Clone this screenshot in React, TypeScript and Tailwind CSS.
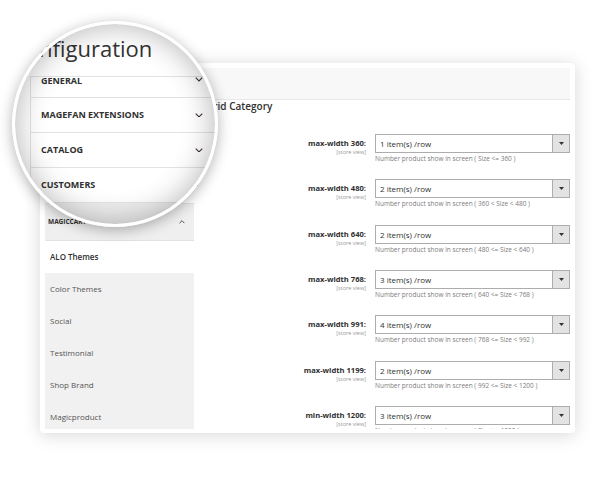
import React from 'react';

const ROWS = [
  { label: 'max-width 360:', value: '1 item(s) /row', hint: 'Number product show in screen ( Size <= 360 )' },
  { label: 'max-width 480:', value: '2 item(s) /row', hint: 'Number product show in screen ( 360 < Size < 480 )' },
  { label: 'max-width 640:', value: '2 item(s) /row', hint: 'Number product show in screen ( 480 <= Size < 640 )' },
  { label: 'max-width 768:', value: '3 item(s) /row', hint: 'Number product show in screen ( 640 <= Size < 768 )' },
  { label: 'max-width 991:', value: '4 item(s) /row', hint: 'Number product show in screen ( 768 <= Size < 992 )' },
  { label: 'max-width 1199:', value: '2 item(s) /row', hint: 'Number product show in screen ( 992 <= Size < 1200 )' },
  { label: 'min-width 1200:', value: '3 item(s) /row', hint: 'Number product show in screen ( Size >= 1200 )' },
];

const SECTIONS = ['GENERAL', 'MAGEFAN EXTENSIONS', 'CATALOG', 'CUSTOMERS'];
const LINKS = ['Color Themes', 'Social', 'Testimonial', 'Shop Brand', 'Magicproduct'];

const Chevron = ({ up = false, size = 8 }: { up?: boolean; size?: number }) => (
  <svg width={size} height={size * 0.6} viewBox="0 0 8 5" fill="none" stroke="#41362f" strokeWidth={1.2}>
    <polyline points={up ? '0.6,4.4 4,1 7.4,4.4' : '0.6,0.6 4,4 7.4,0.6'} />
  </svg>
);

const Magnifier = () => (
  <div className="absolute left-[12px] top-[21px] h-[206px] w-[206px] overflow-hidden rounded-full bg-white shadow-[0_3px_14px_rgba(0,0,0,0.3)]">
    {/* zoomed page, coordinates relative to the lens */}
    <div className="absolute left-[0px] top-[14px] text-[22px] leading-[26px] text-[#333]">Configuration</div>
    <div className="absolute left-[18px] top-[55px] w-[230px] border-l border-t border-[#e3e3e3]">
      {SECTIONS.map((s, i) => (
        <div
          key={s}
          className={`flex justify-between border-b border-[#e3e3e3] pl-[10px] pr-[57px] ${
            i === 0 ? 'h-[21px] items-start' : 'h-[35px] items-center'
          }`}
        >
          <span className="text-[9px] font-bold leading-[8px] text-[#303030]">{s}</span>
          <Chevron />
        </div>
      ))}
      <div className="h-[40px] bg-[#eeeeee]" />
    </div>
    <div className="absolute inset-0 rounded-full border-[3px] border-white shadow-[inset_0_0_30px_rgba(0,0,0,0.3)]" />
  </div>
);

export default function App() {
  return (
    <div className="relative h-[486px] w-[612px] overflow-hidden bg-white font-['Open_Sans',sans-serif]">
      <div className="ml-[40px] mt-[63px] h-[370px] w-[535px] rounded-[4px] bg-white px-[5px] pb-[4px] pt-[5px] shadow-[0_2px_18px_rgba(0,0,0,0.16)]">
        <div className="flex h-full flex-col overflow-hidden">
          <div className="h-[32px] shrink-0 border-b border-[#e8e8e8] bg-[#f8f8f8]" />
          <div className="flex min-h-0 flex-1">
            {/* sidebar */}
            <aside className="flex w-[149px] shrink-0 flex-col overflow-hidden">
              {SECTIONS.map((s) => (
                <div key={s} className="flex h-[26px] shrink-0 items-center justify-between border-b border-[#e3e3e3] px-[10px]">
                  <span className="text-[6.5px] font-bold text-[#303030]">{s}</span>
                  <Chevron size={6} />
                </div>
              ))}
              <div className="flex h-[37px] shrink-0 items-center justify-between border-b border-[#e2e2e2] bg-[#efefef] pl-[3px] pr-[9px]">
                <span className="text-[6.5px] font-bold text-[#303030]">MAGICCART</span>
                <Chevron up size={6} />
              </div>
              <div className="flex h-[32px] shrink-0 items-center px-[5px] text-[8px] font-semibold text-[#303030]">ALO Themes</div>
              <div className="min-h-0 flex-1 bg-[#f1f1f1]">
                {LINKS.map((l) => (
                  <div key={l} className="flex h-[32px] items-center px-[5px] text-[8px] text-[#555]">
                    {l}
                  </div>
                ))}
              </div>
            </aside>

            {/* main form */}
            <main className="flex-1 pl-[12px]">
              <h2 className="text-[10px] font-semibold leading-[12px] text-[#303030]">Grid Category</h2>
              <div className="mt-[22px] flex flex-col">
                {ROWS.map((r) => (
                  <div key={r.label} className="flex h-[45.33px] shrink-0 items-start gap-[9px]">
                    <div className="flex w-[160px] flex-col items-end pt-[4px]">
                      <span className="text-[7.6px] font-bold leading-[10px] text-[#303030]">{r.label}</span>
                      <span className="text-[5.5px] leading-[8px] text-[#999]">[store view]</span>
                    </div>
                    <div className="w-[195px]">
                      <div className="flex h-[19px] border border-[#adadad] bg-white">
                        <span className="flex-1 px-[4px] text-[8px] leading-[17px] text-[#303030]">{r.value}</span>
                        <span className="flex w-[17px] items-center justify-center border-l border-[#adadad] bg-[#e3e3e3]">
                          <svg width="5" height="3" viewBox="0 0 5 3">
                            <polygon points="0,0 5,0 2.5,3" fill="#333" />
                          </svg>
                        </span>
                      </div>
                      <div className="mt-[1px] text-[6.5px] leading-[9px] text-[#7d7d7d]">{r.hint}</div>
                    </div>
                  </div>
                ))}
              </div>
            </main>
          </div>
        </div>
      </div>
      <Magnifier />
    </div>
  );
}
